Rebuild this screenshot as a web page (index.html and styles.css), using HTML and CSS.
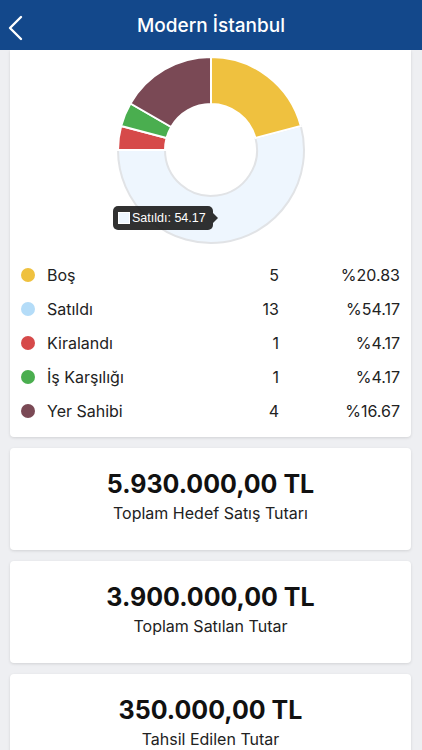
FILE: index.html
```html
<!DOCTYPE html>
<html lang="tr">
<head>
    <meta charset="UTF-8">
    <meta name="viewport" content="width=device-width, initial-scale=1.0">
    <title>Modern İstanbul</title>
    <link rel="stylesheet" href="styles.css">
</head>
<body>
    <header class="topbar">
        <svg class="back" width="16" height="26" viewBox="0 0 16 26">
            <path d="M14 2 L3 13 L14 24" fill="none" stroke="#fff" stroke-width="2.4" stroke-linecap="round" stroke-linejoin="round"/>
        </svg>
        <h1 class="title">Modern İstanbul</h1>
    </header>

    <main class="content">
        <section class="card chart-card">
            <div class="chart">
                <svg width="200" height="200" viewBox="0 0 200 200">
                    <path d="M189.83 75.93 A93 93 0 1 1 7 100 L54 100 A46 46 0 1 0 144.43 88.09 Z" fill="#eef6fe" stroke="#e1e3e6" stroke-width="2"/>
                    <path d="M100 7 A93 93 0 0 1 189.83 75.93 L144.43 88.09 A46 46 0 0 0 100 54 Z" fill="#efc13f" stroke="#fff" stroke-width="2"/>
                    <path d="M7 100 A93 93 0 0 1 10.17 75.93 L55.57 88.09 A46 46 0 0 0 54 100 Z" fill="#d64a4a" stroke="#fff" stroke-width="2"/>
                    <path d="M10.17 75.93 A93 93 0 0 1 19.46 53.5 L60.16 77 A46 46 0 0 0 55.57 88.09 Z" fill="#4aae4f" stroke="#fff" stroke-width="2"/>
                    <path d="M19.46 53.5 A93 93 0 0 1 100 7 L100 54 A46 46 0 0 0 60.16 77 Z" fill="#7a4955" stroke="#fff" stroke-width="2"/>
                </svg>
                <div class="tooltip">
                    <span class="tip-swatch"></span>
                    <span>Satıldı: 54.17</span>
                </div>
            </div>

            <ul class="legend">
                <li class="legend-row">
                    <span class="dot dot-bos"></span>
                    <span class="label">Boş</span>
                    <span class="count">5</span>
                    <span class="pct">%20.83</span>
                </li>
                <li class="legend-row">
                    <span class="dot dot-satildi"></span>
                    <span class="label">Satıldı</span>
                    <span class="count">13</span>
                    <span class="pct">%54.17</span>
                </li>
                <li class="legend-row">
                    <span class="dot dot-kira"></span>
                    <span class="label">Kiralandı</span>
                    <span class="count">1</span>
                    <span class="pct">%4.17</span>
                </li>
                <li class="legend-row">
                    <span class="dot dot-is"></span>
                    <span class="label">İş Karşılığı</span>
                    <span class="count">1</span>
                    <span class="pct">%4.17</span>
                </li>
                <li class="legend-row">
                    <span class="dot dot-yer"></span>
                    <span class="label">Yer Sahibi</span>
                    <span class="count">4</span>
                    <span class="pct">%16.67</span>
                </li>
            </ul>
        </section>

        <section class="card total-card">
            <div class="amount">5.930.000,00 TL</div>
            <div class="caption">Toplam Hedef Satış Tutarı</div>
        </section>

        <section class="card total-card">
            <div class="amount">3.900.000,00 TL</div>
            <div class="caption">Toplam Satılan Tutar</div>
        </section>

        <section class="card total-card">
            <div class="amount">350.000,00 TL</div>
            <div class="caption">Tahsil Edilen Tutar</div>
        </section>
    </main>
</body>
</html>
```

FILE: styles.css
```css
body {
    margin: 0;
    background: #eeeff2;
    font-family: Inter, "Noto Sans", Arial, sans-serif;
    color: #1c1c1e;
    height: 750px;
    overflow: hidden;
}
.topbar {
    height: 50px;
    background: #13488b;
    display: flex;
    align-items: center;
    justify-content: center;
    position: relative;
}
.back {
    position: absolute;
    left: 7px;
    top: 15px;
}
.title {
    margin: 0;
    color: #fff;
    font-size: 19px;
    font-weight: 500;
}
.content {
    display: flex;
    flex-direction: column;
    gap: 11px;
    padding: 0 11px 0 10px;
}
.card {
    background: #fff;
    border-radius: 4px;
    box-shadow: 0 1px 3px rgba(0, 0, 0, 0.12);
}
.chart-card {
    border-radius: 0 0 4px 4px;
    padding: 0 11px 9px 11px;
}
.chart {
    position: relative;
    display: flex;
    justify-content: center;
}
.tooltip {
    position: absolute;
    left: 92px;
    top: 156px;
    height: 24px;
    padding: 0 7px 0 5px;
    display: flex;
    align-items: center;
    gap: 2px;
    background: rgba(20, 20, 20, 0.88);
    border-radius: 5px;
    color: #fff;
    font-family: "Liberation Sans", Arial, sans-serif;
    font-size: 12.5px;
}
.tooltip::after {
    content: "";
    position: absolute;
    right: -5px;
    top: 7px;
    border-top: 5px solid transparent;
    border-bottom: 5px solid transparent;
    border-left: 5px solid rgba(20, 20, 20, 0.88);
}
.tip-swatch {
    width: 12px;
    height: 12px;
    background: #eef6fe;
    border: 1px solid #fff;
    box-sizing: border-box;
}
.legend {
    list-style: none;
    margin: 8px 0 0;
    padding: 0;
}
.legend-row {
    height: 34px;
    display: grid;
    grid-template-columns: 14px 12px 1fr 60px 121px;
    align-items: center;
    font-size: 16px;
    color: #222;
}
.legend-row .label {
    grid-column: 3;
}
.legend-row .count,
.legend-row .pct {
    text-align: right;
}
.dot {
    width: 14px;
    height: 14px;
    border-radius: 50%;
}
.dot-bos { background: #efc13f; }
.dot-satildi { background: #b4dcf8; }
.dot-kira { background: #d64a4a; }
.dot-is { background: #4aae4f; }
.dot-yer { background: #7a4955; }
.total-card {
    height: 102px;
    box-sizing: border-box;
    padding-top: 21px;
    text-align: center;
}
.amount {
    font-size: 25px;
    font-weight: 700;
    color: #111;
    line-height: 30px;
}
.caption {
    margin-top: 2px;
    font-size: 16px;
    color: #222;
    line-height: 24px;
}
```
